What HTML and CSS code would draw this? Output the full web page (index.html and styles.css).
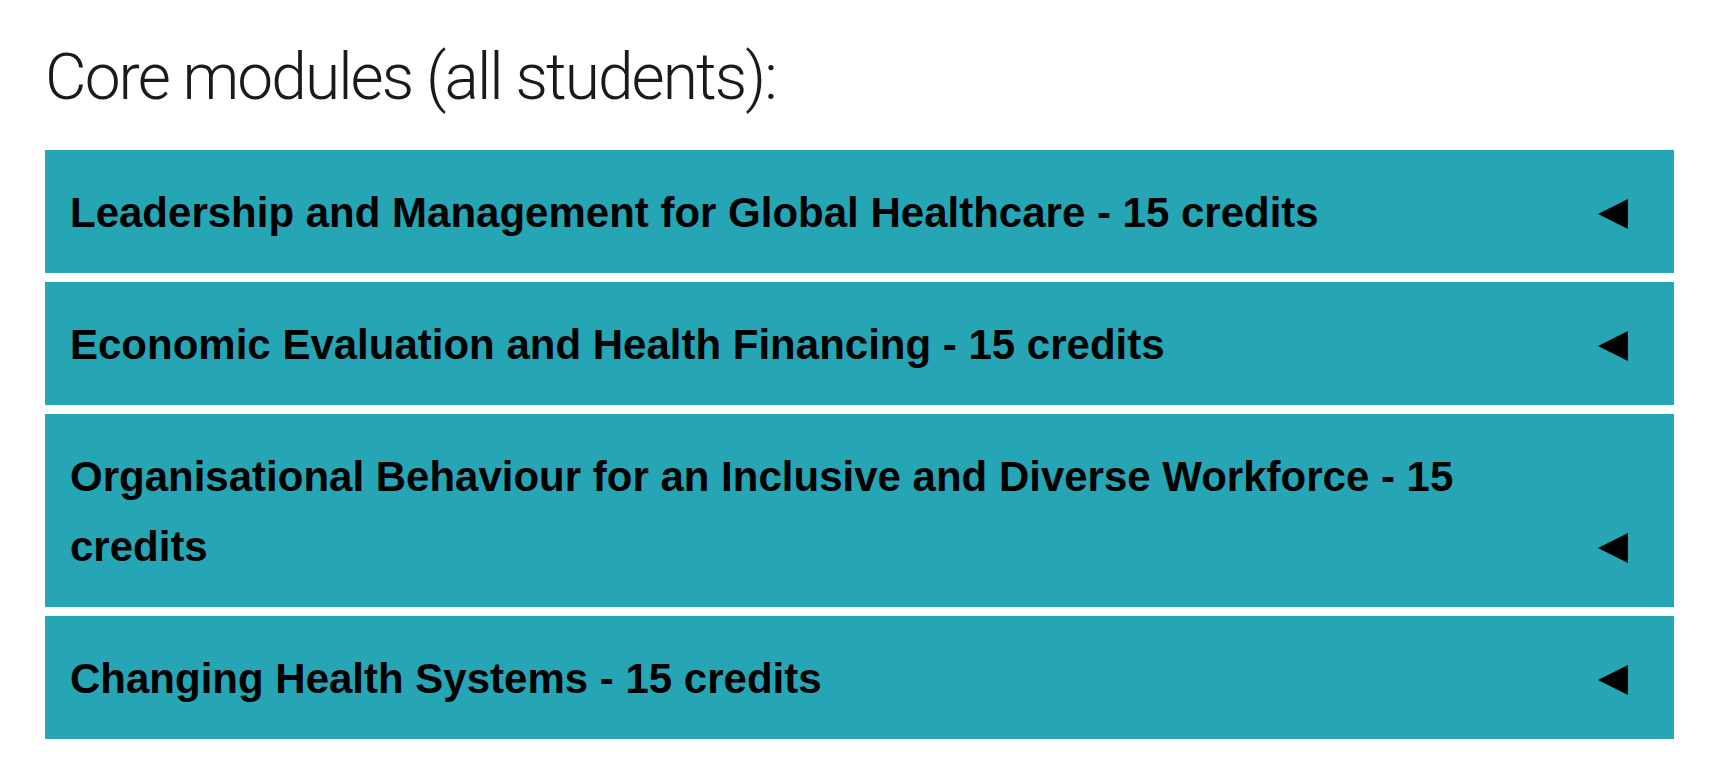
FILE: index.html
```html
<!DOCTYPE html>
<html lang="en">
<head>
  <meta charset="UTF-8" />
  <meta name="viewport" content="width=device-width, initial-scale=1" />
  <title>Core modules</title>
  <link rel="stylesheet" href="styles.css">
</head>
<body>
  <div class="modules">
    <h2>Core modules (all students):</h2>

    <details class="module">
      <summary><span class="module-title">Leadership and Management for Global Healthcare - 15 credits</span><span class="arrow"><i></i></span></summary>
    </details>
    <details class="module">
      <summary><span class="module-title">Economic Evaluation and Health Financing - 15 credits</span><span class="arrow"><i></i></span></summary>
    </details>
    <details class="module">
      <summary><span class="module-title">Organisational Behaviour for an Inclusive and Diverse Workforce - 15 credits</span><span class="arrow"><i></i></span></summary>
    </details>
    <details class="module">
      <summary><span class="module-title">Changing Health Systems - 15 credits</span><span class="arrow"><i></i></span></summary>
    </details>
  </div>
</body>
</html>
```

FILE: styles.css
```css
body {
  margin: 0;
  padding: 0;
  background: #fff;
  color: #000;
  font-family: 'Liberation Sans', Arial, Helvetica, sans-serif;
}
.modules {
  width: 1629px;
  padding: 40px 0 40px 45px;
}
h2 {
  margin: 0 0 33px 0;
  font-family: Roboto, 'Liberation Sans', sans-serif;
  font-weight: 300;
  font-size: 64px;
  letter-spacing: -0.03em;
  line-height: 1.2;
  color: #1a1a1a;
}
.module {
  background-color: #26a5b5;
  margin-bottom: 9px;
}
.module summary {
  display: flex;
  align-items: flex-end;
  gap: 20px;
  padding: 28px 46px 25px 25px;
  list-style: none;
  cursor: pointer;
}
.module summary::-webkit-details-marker {
  display: none;
}
.module-title {
  flex: 1;
  font-size: 42px;
  font-weight: bold;
  line-height: 70px;
}
.arrow {
  display: flex;
  align-items: center;
  height: 70px;
}
.arrow i {
  display: block;
  width: 0;
  height: 0;
  margin-top: 2px;
  border-top: 15px solid transparent;
  border-bottom: 15px solid transparent;
  border-right: 30px solid #000;
}
```
